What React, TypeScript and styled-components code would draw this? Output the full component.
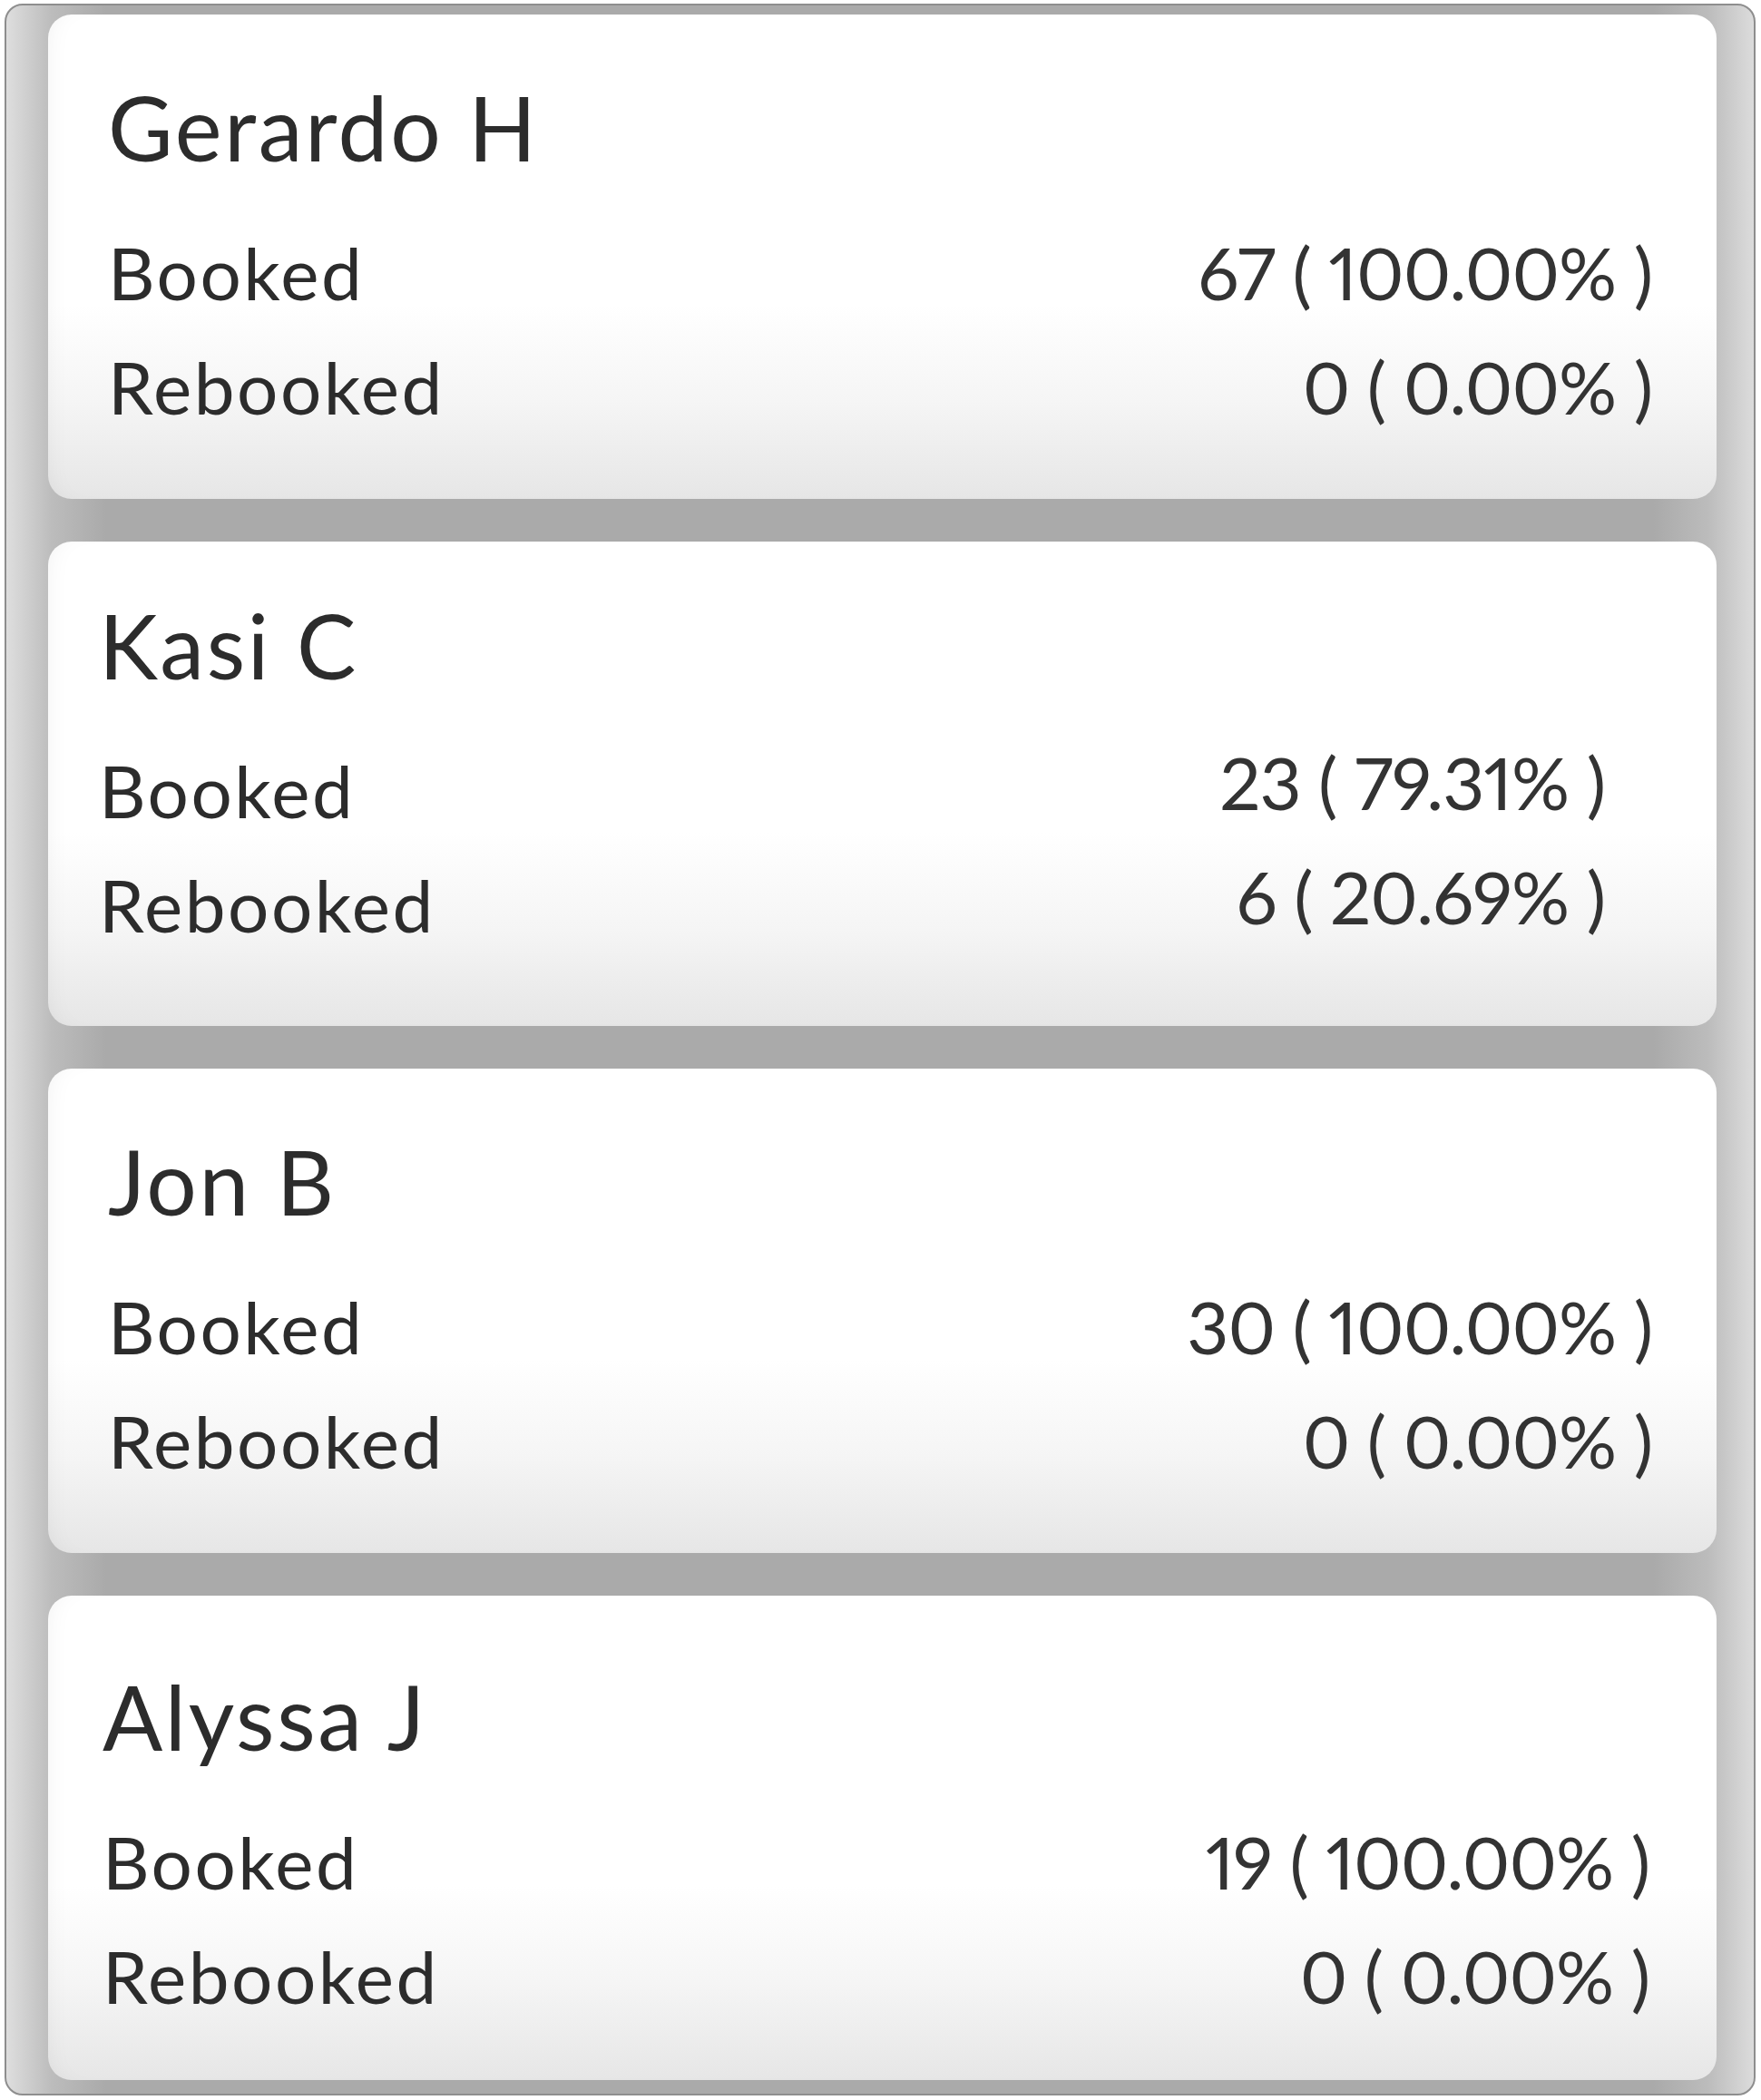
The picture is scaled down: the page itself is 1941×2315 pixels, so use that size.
import React from 'react';
import styled, { createGlobalStyle } from 'styled-components';

const Global = createGlobalStyle`
  html, body { margin: 0; padding: 0; background: #ffffff; }
  body { font-family: Lato, "Liberation Sans", sans-serif; color: #2c2c2c; }
`;

const Frame = styled.main`
  box-sizing: border-box;
  margin: 4px 0 0 5px;
  width: 1930px;
  height: 2306px;
  border: 2px solid #8e8e8e;
  border-radius: 20px;
  background: linear-gradient(
    to right,
    #dedede 0px,
    #bcbcbc 50px,
    #aaaaaa 110px,
    #aaaaaa calc(100% - 110px),
    #bcbcbc calc(100% - 50px),
    #dcdcdc 100%
  );
  padding: 10px 41px 0 46px;
  display: flex;
  flex-direction: column;
  gap: 47px;
`;

const Card = styled.section<{ $dy: number; $left: number; $right: number }>`
  box-sizing: border-box;
  height: 534px;
  border-radius: 26px;
  background: linear-gradient(
    to bottom,
    #ffffff 0%,
    #ffffff 60%,
    #f5f5f5 80%,
    #e6e6e6 100%
  );
  box-shadow: inset 16px 0 30px -22px rgba(0, 0, 0, 0.08);
  padding: ${(p) => 64 + p.$dy}px ${(p) => p.$right}px 0 ${(p) => p.$left}px;
  display: flex;
  flex-direction: column;
`;

const Name = styled.h2`
  margin: 0 0 37px 0;
  font-size: 98px;
  line-height: 120px;
  font-weight: 400;
  letter-spacing: 2.7px;
  color: #2c2c2c;
`;

const Row = styled.div`
  display: flex;
  justify-content: space-between;
  align-items: flex-start;
`;

const Label = styled.span`
  font-size: 80px;
  line-height: 126px;
  font-weight: 400;
  letter-spacing: 2.5px;
`;

const Value = styled.span<{ $lift: number }>`
  font-size: 80px;
  line-height: ${(p) => 126 - 2 * p.$lift}px;
  font-weight: 400;
  color: #333333;
  white-space: pre;
  font-variant-numeric: proportional-nums;
  font-feature-settings: "pnum" 1;
  letter-spacing: -1px;
`;

type Stat = { label: string; value: string };
type Person = {
  name: string;
  stats: Stat[];
  dy: number;
  left: number;
  right: number;
  lift: number;
};

const people: Person[] = [
  {
    name: 'Gerardo H',
    stats: [
      { label: 'Booked', value: '67 ( 100.00% )' },
      { label: 'Rebooked', value: '0 ( 0.00% )' },
    ],
    dy: 0,
    left: 66,
    right: 71,
    lift: 0,
  },
  {
    name: 'Kasi C',
    stats: [
      { label: 'Booked', value: '23 ( 79.31% )' },
      { label: 'Rebooked', value: '6 ( 20.69% )' },
    ],
    dy: -10,
    left: 56,
    right: 123,
    lift: 9,
  },
  {
    name: 'Jon B',
    stats: [
      { label: 'Booked', value: '30 ( 100.00% )' },
      { label: 'Rebooked', value: '0 ( 0.00% )' },
    ],
    dy: 0,
    left: 66,
    right: 71,
    lift: 0,
  },
  {
    name: 'Alyssa J',
    stats: [
      { label: 'Booked', value: '19 ( 100.00% )' },
      { label: 'Rebooked', value: '0 ( 0.00% )' },
    ],
    dy: 9,
    left: 60,
    right: 74,
    lift: 0,
  },
];

export default function App() {
  return (
    <>
      <Global />
      <Frame>
        {people.map((p) => (
          <Card key={p.name} $dy={p.dy} $left={p.left} $right={p.right}>
            <Name>{p.name}</Name>
            {p.stats.map((s) => (
              <Row key={s.label}>
                <Label>{s.label}</Label>
                <Value $lift={p.lift}>{s.value}</Value>
              </Row>
            ))}
          </Card>
        ))}
      </Frame>
    </>
  );
}
